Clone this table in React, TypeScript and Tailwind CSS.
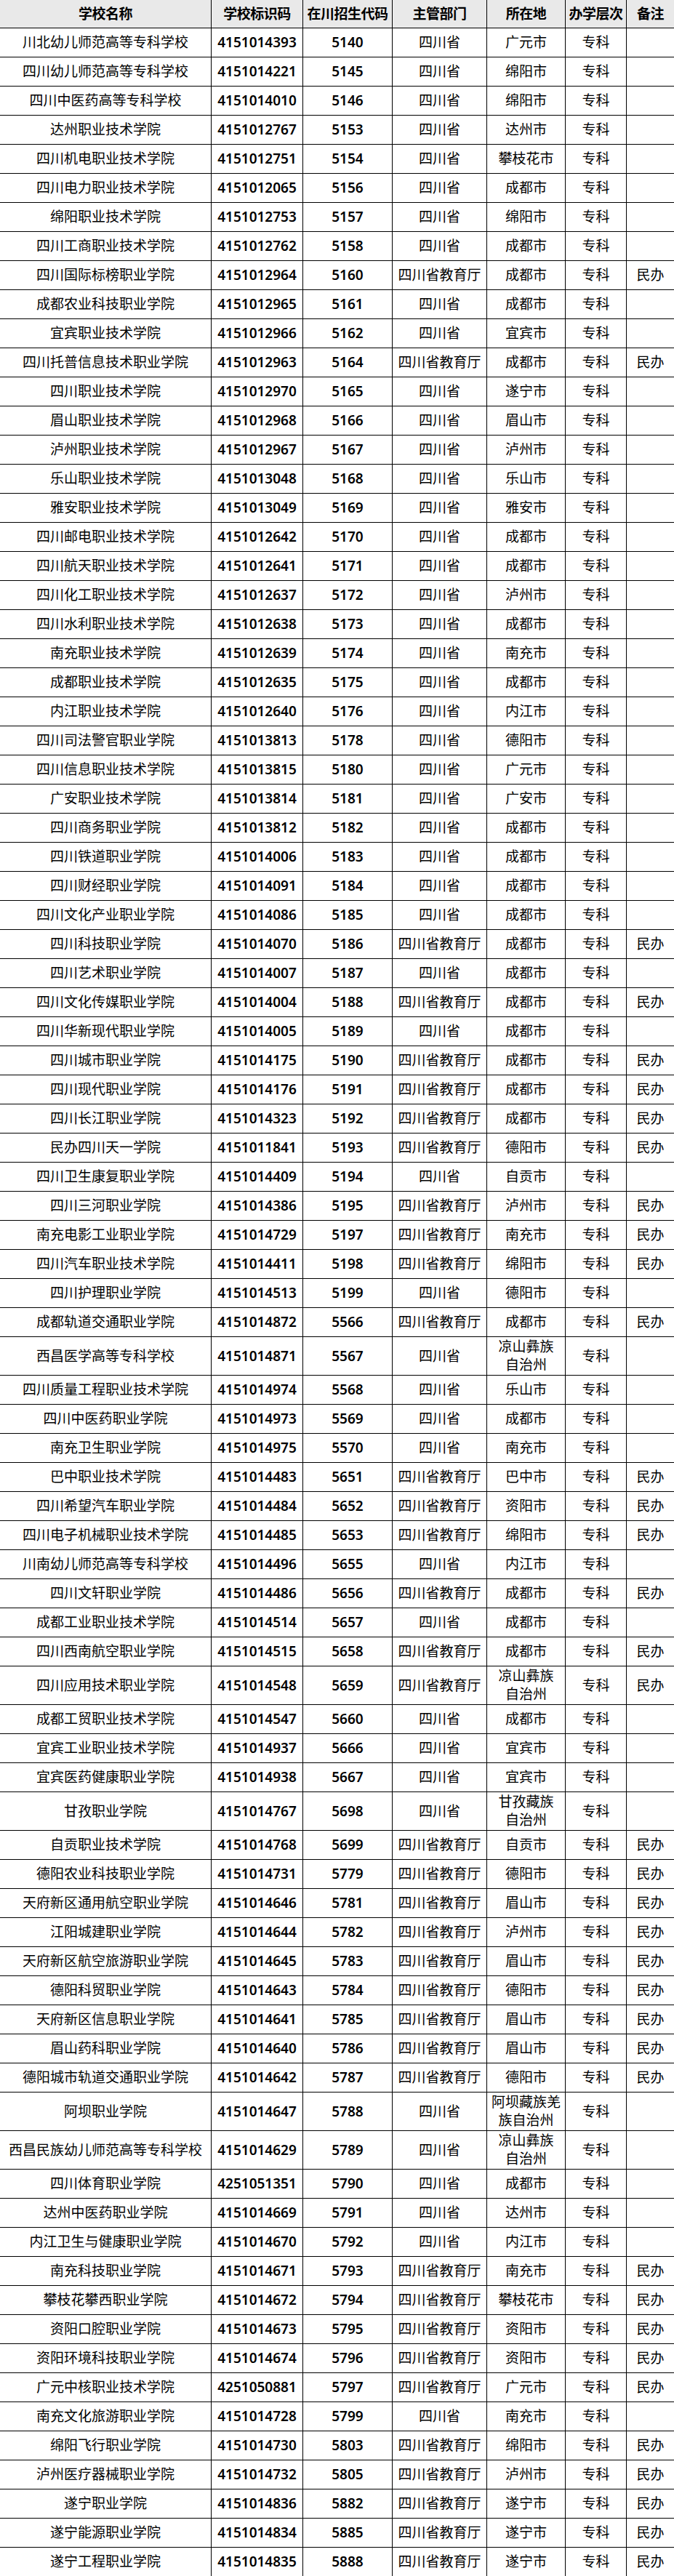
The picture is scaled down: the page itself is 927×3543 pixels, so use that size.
const rows: string[][] = [
  ["川北幼儿师范高等专科学校", "4151014393", "5140", "四川省", "广元市", "专科", ""],
  ["四川幼儿师范高等专科学校", "4151014221", "5145", "四川省", "绵阳市", "专科", ""],
  ["四川中医药高等专科学校", "4151014010", "5146", "四川省", "绵阳市", "专科", ""],
  ["达州职业技术学院", "4151012767", "5153", "四川省", "达州市", "专科", ""],
  ["四川机电职业技术学院", "4151012751", "5154", "四川省", "攀枝花市", "专科", ""],
  ["四川电力职业技术学院", "4151012065", "5156", "四川省", "成都市", "专科", ""],
  ["绵阳职业技术学院", "4151012753", "5157", "四川省", "绵阳市", "专科", ""],
  ["四川工商职业技术学院", "4151012762", "5158", "四川省", "成都市", "专科", ""],
  ["四川国际标榜职业学院", "4151012964", "5160", "四川省教育厅", "成都市", "专科", "民办"],
  ["成都农业科技职业学院", "4151012965", "5161", "四川省", "成都市", "专科", ""],
  ["宜宾职业技术学院", "4151012966", "5162", "四川省", "宜宾市", "专科", ""],
  ["四川托普信息技术职业学院", "4151012963", "5164", "四川省教育厅", "成都市", "专科", "民办"],
  ["四川职业技术学院", "4151012970", "5165", "四川省", "遂宁市", "专科", ""],
  ["眉山职业技术学院", "4151012968", "5166", "四川省", "眉山市", "专科", ""],
  ["泸州职业技术学院", "4151012967", "5167", "四川省", "泸州市", "专科", ""],
  ["乐山职业技术学院", "4151013048", "5168", "四川省", "乐山市", "专科", ""],
  ["雅安职业技术学院", "4151013049", "5169", "四川省", "雅安市", "专科", ""],
  ["四川邮电职业技术学院", "4151012642", "5170", "四川省", "成都市", "专科", ""],
  ["四川航天职业技术学院", "4151012641", "5171", "四川省", "成都市", "专科", ""],
  ["四川化工职业技术学院", "4151012637", "5172", "四川省", "泸州市", "专科", ""],
  ["四川水利职业技术学院", "4151012638", "5173", "四川省", "成都市", "专科", ""],
  ["南充职业技术学院", "4151012639", "5174", "四川省", "南充市", "专科", ""],
  ["成都职业技术学院", "4151012635", "5175", "四川省", "成都市", "专科", ""],
  ["内江职业技术学院", "4151012640", "5176", "四川省", "内江市", "专科", ""],
  ["四川司法警官职业学院", "4151013813", "5178", "四川省", "德阳市", "专科", ""],
  ["四川信息职业技术学院", "4151013815", "5180", "四川省", "广元市", "专科", ""],
  ["广安职业技术学院", "4151013814", "5181", "四川省", "广安市", "专科", ""],
  ["四川商务职业学院", "4151013812", "5182", "四川省", "成都市", "专科", ""],
  ["四川铁道职业学院", "4151014006", "5183", "四川省", "成都市", "专科", ""],
  ["四川财经职业学院", "4151014091", "5184", "四川省", "成都市", "专科", ""],
  ["四川文化产业职业学院", "4151014086", "5185", "四川省", "成都市", "专科", ""],
  ["四川科技职业学院", "4151014070", "5186", "四川省教育厅", "成都市", "专科", "民办"],
  ["四川艺术职业学院", "4151014007", "5187", "四川省", "成都市", "专科", ""],
  ["四川文化传媒职业学院", "4151014004", "5188", "四川省教育厅", "成都市", "专科", "民办"],
  ["四川华新现代职业学院", "4151014005", "5189", "四川省", "成都市", "专科", ""],
  ["四川城市职业学院", "4151014175", "5190", "四川省教育厅", "成都市", "专科", "民办"],
  ["四川现代职业学院", "4151014176", "5191", "四川省教育厅", "成都市", "专科", "民办"],
  ["四川长江职业学院", "4151014323", "5192", "四川省教育厅", "成都市", "专科", "民办"],
  ["民办四川天一学院", "4151011841", "5193", "四川省教育厅", "德阳市", "专科", "民办"],
  ["四川卫生康复职业学院", "4151014409", "5194", "四川省", "自贡市", "专科", ""],
  ["四川三河职业学院", "4151014386", "5195", "四川省教育厅", "泸州市", "专科", "民办"],
  ["南充电影工业职业学院", "4151014729", "5197", "四川省教育厅", "南充市", "专科", "民办"],
  ["四川汽车职业技术学院", "4151014411", "5198", "四川省教育厅", "绵阳市", "专科", "民办"],
  ["四川护理职业学院", "4151014513", "5199", "四川省", "德阳市", "专科", ""],
  ["成都轨道交通职业学院", "4151014872", "5566", "四川省教育厅", "成都市", "专科", "民办"],
  ["西昌医学高等专科学校", "4151014871", "5567", "四川省", "凉山彝族\n自治州", "专科", ""],
  ["四川质量工程职业技术学院", "4151014974", "5568", "四川省", "乐山市", "专科", ""],
  ["四川中医药职业学院", "4151014973", "5569", "四川省", "成都市", "专科", ""],
  ["南充卫生职业学院", "4151014975", "5570", "四川省", "南充市", "专科", ""],
  ["巴中职业技术学院", "4151014483", "5651", "四川省教育厅", "巴中市", "专科", "民办"],
  ["四川希望汽车职业学院", "4151014484", "5652", "四川省教育厅", "资阳市", "专科", "民办"],
  ["四川电子机械职业技术学院", "4151014485", "5653", "四川省教育厅", "绵阳市", "专科", "民办"],
  ["川南幼儿师范高等专科学校", "4151014496", "5655", "四川省", "内江市", "专科", ""],
  ["四川文轩职业学院", "4151014486", "5656", "四川省教育厅", "成都市", "专科", "民办"],
  ["成都工业职业技术学院", "4151014514", "5657", "四川省", "成都市", "专科", ""],
  ["四川西南航空职业学院", "4151014515", "5658", "四川省教育厅", "成都市", "专科", "民办"],
  ["四川应用技术职业学院", "4151014548", "5659", "四川省教育厅", "凉山彝族\n自治州", "专科", "民办"],
  ["成都工贸职业技术学院", "4151014547", "5660", "四川省", "成都市", "专科", ""],
  ["宜宾工业职业技术学院", "4151014937", "5666", "四川省", "宜宾市", "专科", ""],
  ["宜宾医药健康职业学院", "4151014938", "5667", "四川省", "宜宾市", "专科", ""],
  ["甘孜职业学院", "4151014767", "5698", "四川省", "甘孜藏族\n自治州", "专科", ""],
  ["自贡职业技术学院", "4151014768", "5699", "四川省教育厅", "自贡市", "专科", "民办"],
  ["德阳农业科技职业学院", "4151014731", "5779", "四川省教育厅", "德阳市", "专科", "民办"],
  ["天府新区通用航空职业学院", "4151014646", "5781", "四川省教育厅", "眉山市", "专科", "民办"],
  ["江阳城建职业学院", "4151014644", "5782", "四川省教育厅", "泸州市", "专科", "民办"],
  ["天府新区航空旅游职业学院", "4151014645", "5783", "四川省教育厅", "眉山市", "专科", "民办"],
  ["德阳科贸职业学院", "4151014643", "5784", "四川省教育厅", "德阳市", "专科", "民办"],
  ["天府新区信息职业学院", "4151014641", "5785", "四川省教育厅", "眉山市", "专科", "民办"],
  ["眉山药科职业学院", "4151014640", "5786", "四川省教育厅", "眉山市", "专科", "民办"],
  ["德阳城市轨道交通职业学院", "4151014642", "5787", "四川省教育厅", "德阳市", "专科", "民办"],
  ["阿坝职业学院", "4151014647", "5788", "四川省", "阿坝藏族羌\n族自治州", "专科", ""],
  ["西昌民族幼儿师范高等专科学校", "4151014629", "5789", "四川省", "凉山彝族\n自治州", "专科", ""],
  ["四川体育职业学院", "4251051351", "5790", "四川省", "成都市", "专科", ""],
  ["达州中医药职业学院", "4151014669", "5791", "四川省", "达州市", "专科", ""],
  ["内江卫生与健康职业学院", "4151014670", "5792", "四川省", "内江市", "专科", ""],
  ["南充科技职业学院", "4151014671", "5793", "四川省教育厅", "南充市", "专科", "民办"],
  ["攀枝花攀西职业学院", "4151014672", "5794", "四川省教育厅", "攀枝花市", "专科", "民办"],
  ["资阳口腔职业学院", "4151014673", "5795", "四川省教育厅", "资阳市", "专科", "民办"],
  ["资阳环境科技职业学院", "4151014674", "5796", "四川省教育厅", "资阳市", "专科", "民办"],
  ["广元中核职业技术学院", "4251050881", "5797", "四川省教育厅", "广元市", "专科", "民办"],
  ["南充文化旅游职业学院", "4151014728", "5799", "四川省", "南充市", "专科", ""],
  ["绵阳飞行职业学院", "4151014730", "5803", "四川省教育厅", "绵阳市", "专科", "民办"],
  ["泸州医疗器械职业学院", "4151014732", "5805", "四川省教育厅", "泸州市", "专科", "民办"],
  ["遂宁职业学院", "4151014836", "5882", "四川省教育厅", "遂宁市", "专科", "民办"],
  ["遂宁能源职业学院", "4151014834", "5885", "四川省教育厅", "遂宁市", "专科", "民办"],
  ["遂宁工程职业学院", "4151014835", "5888", "四川省教育厅", "遂宁市", "专科", "民办"],
]

const headers = ["学校名称", "学校标识码", "在川招生代码", "主管部门", "所在地", "办学层次", "备注"]

export default function App() {
  return (
    <div
      className="w-[927px] bg-white text-black text-[19px]"
      style={{ fontFamily: '"Noto Sans", "Noto Sans CJK SC", sans-serif' }}
    >
      {/* header */}
      <div className="grid grid-cols-[290px_126px_123px_130px_108px_84px_66px] h-[39px] bg-[#e9e9e9] border-b border-black font-bold">
        {headers.map((h, i) => (
          <div
            key={h}
            className={`flex items-center justify-center whitespace-nowrap tracking-[-0.5px] ${i > 0 ? "border-l border-black" : ""}`}
          >
            {h}
          </div>
        ))}
      </div>

      {rows.map((r) => {
        const tall = r[4].includes("\n")
        return (
          <div
            key={r[1]}
            className={`grid grid-cols-[290px_126px_123px_130px_108px_84px_66px] border-b border-black ${tall ? "h-[53px]" : "h-[40px]"}`}
          >
            <div className="flex items-center justify-center whitespace-nowrap">{r[0]}</div>
            <div className="flex items-center justify-center border-l border-black font-semibold">{r[1]}</div>
            <div className="flex items-center justify-center border-l border-black font-semibold">{r[2]}</div>
            <div className="flex items-center justify-center border-l border-black whitespace-nowrap">{r[3]}</div>
            <div className="flex items-center justify-center border-l border-black whitespace-pre-line text-center leading-[25px]">
              {r[4]}
            </div>
            <div className="flex items-center justify-center border-l border-black">{r[5]}</div>
            <div className="flex items-center justify-center border-l border-black">{r[6]}</div>
          </div>
        )
      })}
    </div>
  )
}
